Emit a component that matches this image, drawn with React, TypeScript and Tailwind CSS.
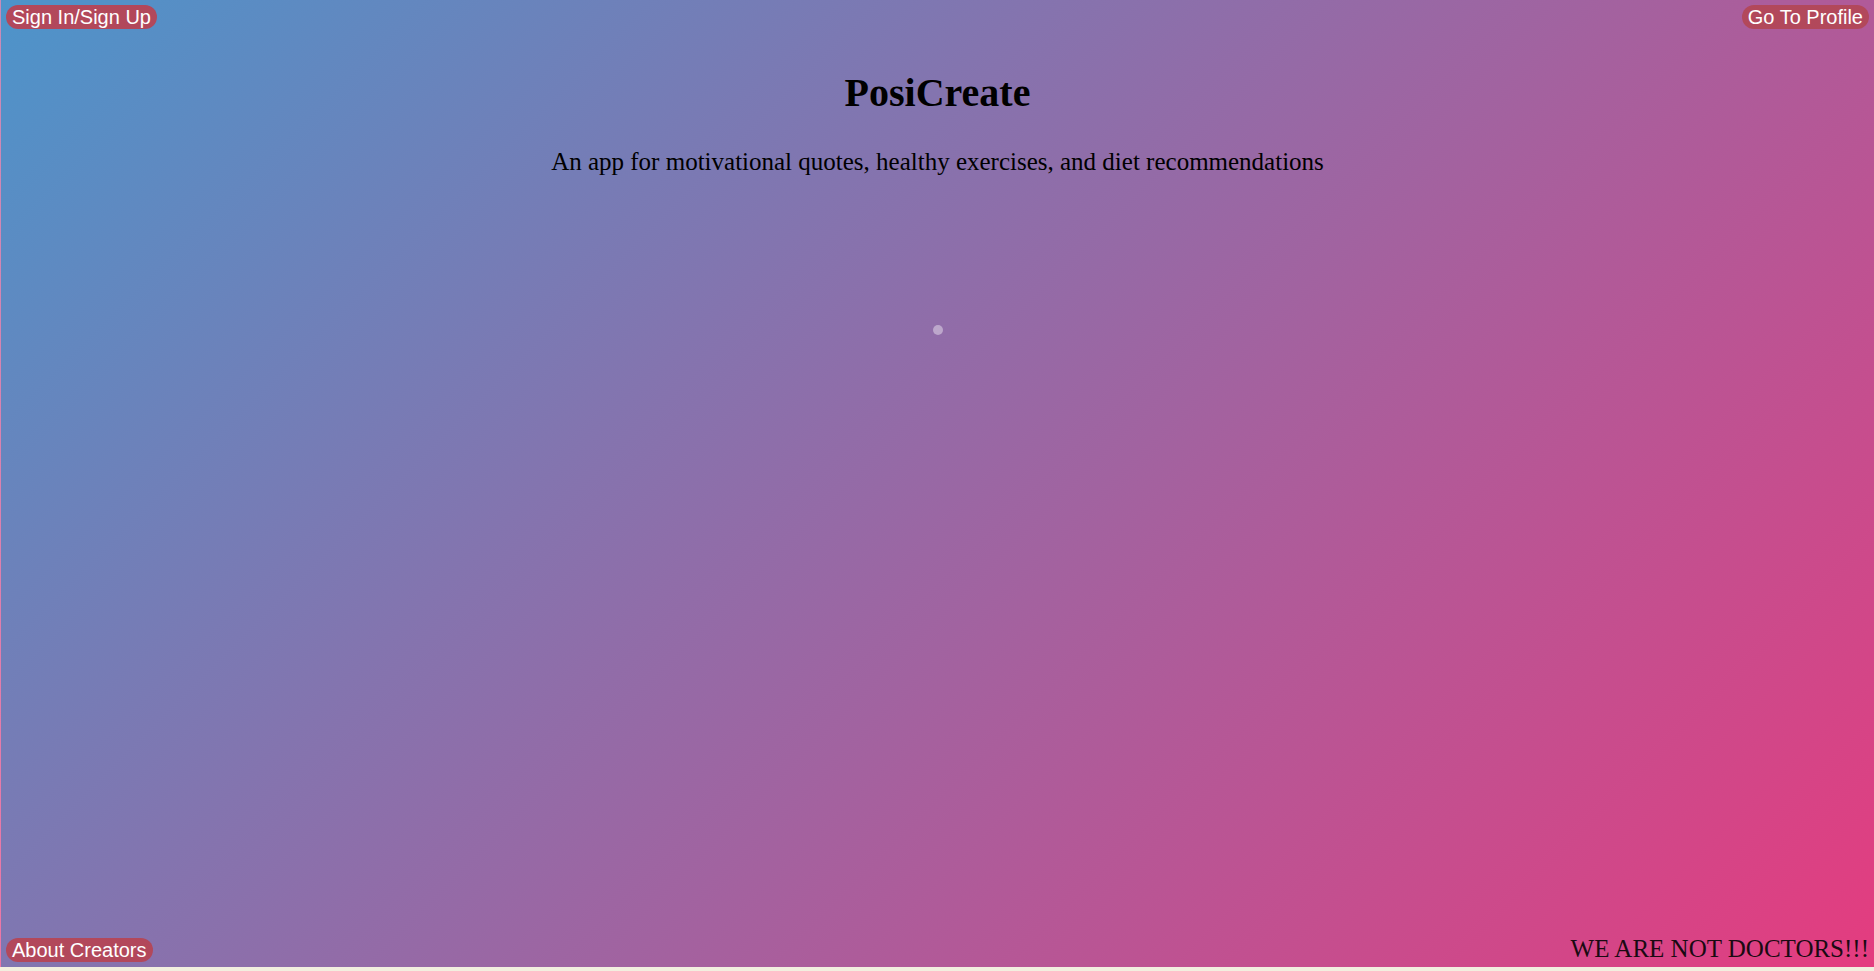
export default function App() {
  return (
    <div className="w-full h-[971px] bg-[#f2efdf] overflow-hidden">
      <div className="relative flex flex-col h-[967px] border-l border-white/30 bg-[linear-gradient(135deg,#4d94ca,#e43c7f)] font-['Liberation_Serif',serif] text-black">
        {/* top nav */}
        <div className="flex justify-between px-[5px] pt-[5px]">
          <button className="px-1.5 py-px rounded-full bg-[#b2485b] text-white text-[20px] leading-[22px] font-['Liberation_Sans',sans-serif]">
            Sign In/Sign Up
          </button>
          <button className="px-1.5 py-px rounded-full bg-[#b2485b] text-white text-[20px] leading-[22px] font-['Liberation_Sans',sans-serif]">
            Go To Profile
          </button>
        </div>

        {/* header */}
        <div className="flex flex-col items-center">
          <h1 className="mt-[41px] text-[40px] font-bold leading-[46px]">PosiCreate</h1>
          <p className="mt-[31px] text-[25px] leading-[29px]">
            An app for motivational quotes, healthy exercises, and diet recommendations
          </p>
          <div className="mt-[149px] w-2.5 h-2.5 rounded-full bg-white/40" />
        </div>

        <div className="flex-1" />

        {/* footer */}
        <div className="flex justify-between items-end px-[5px] pb-[5px]">
          <button className="px-1.5 py-px rounded-full bg-[#b2485b] text-white text-[20px] leading-[22px] font-['Liberation_Sans',sans-serif]">
            About Creators
          </button>
          <span className="text-[25px] leading-[27px] text-[#1a0a12]">WE ARE NOT DOCTORS!!!</span>
        </div>
      </div>
    </div>
  )
}
